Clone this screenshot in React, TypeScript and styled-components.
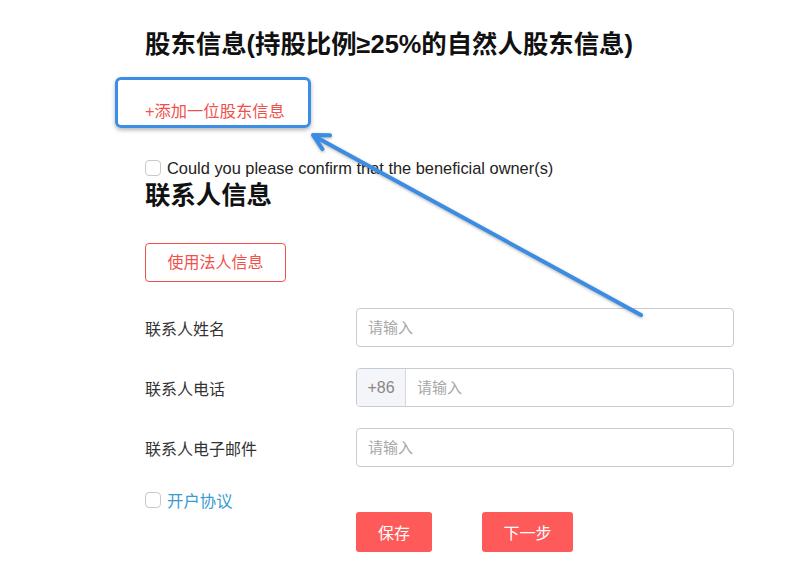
import React from "react";
import styled, { createGlobalStyle } from "styled-components";

const GlobalStyle = createGlobalStyle`
  html, body {
    margin: 0;
    padding: 0;
    background: #fff;
  }
  body {
    font-family: "Liberation Sans", "Noto Sans CJK SC", sans-serif;
    color: #222;
  }
`;

const red = "#f2504b";
const fill = "#ff5a5a";

const Page = styled.div`
  position: relative;
  width: 800px;
  height: 572px;
  overflow: hidden;
  display: flex;
  flex-direction: column;
  align-items: flex-start;
  padding-left: 145px;
  box-sizing: border-box;
`;

const SectionTitle = styled.h2<{ $top: number }>`
  margin: ${(p) => p.$top}px 0 0;
  font-size: 25.4px;
  line-height: 30px;
  height: 30px;
  font-weight: bold;
  color: #111;
  white-space: nowrap;
`;

const AddLink = styled.a`
  margin-top: 40px;
  font-size: 16.3px;
  line-height: 24px;
  color: ${red};
  cursor: pointer;
`;

const CheckRow = styled.label<{ $top: number }>`
  display: flex;
  align-items: center;
  gap: 6px;
  margin-top: ${(p) => p.$top}px;
  height: 20px;
  font-size: 16.4px;
  color: #222;
  white-space: nowrap;
`;

const Box = styled.span`
  width: 16px;
  height: 16px;
  border: 1px solid #c9c9c9;
  border-radius: 4px;
  background: #fff;
  box-sizing: border-box;
  flex: none;
`;

const AgreeText = styled.span`
  color: #3a9bd0;
`;

const OutlineButton = styled.button`
  margin-top: 33px;
  width: 141px;
  height: 39px;
  padding: 0 0 3px;
  border: 1px solid ${red};
  border-radius: 4px;
  background: #fff;
  color: ${red};
  font: inherit;
  font-size: 16px;
`;

const Form = styled.div`
  margin-top: 26px;
  display: flex;
  flex-direction: column;
  gap: 21px;
`;

const Row = styled.div`
  display: grid;
  grid-template-columns: 211px 378px;
  align-items: center;
  height: 39px;
`;

const Label = styled.span`
  font-size: 16px;
  color: #333;
`;

const InputWrap = styled.div`
  display: flex;
  height: 39px;
  border: 1px solid #c6ccd6;
  border-radius: 4px;
  box-sizing: border-box;
  overflow: hidden;
  background: #fff;
`;

const Prefix = styled.span`
  width: 48px;
  flex: none;
  display: flex;
  align-items: center;
  justify-content: center;
  background: #f4f5f9;
  border-right: 1px solid #d4d8e0;
  color: #888;
  font-size: 16px;
`;

const Input = styled.input`
  flex: 1;
  border: none;
  outline: none;
  padding: 0 11px;
  font: inherit;
  font-size: 15px;
  color: #333;
  background: transparent;
  &::placeholder {
    color: #a8a8a8;
  }
`;

const Actions = styled.div`
  margin-top: 2px;
  margin-left: 211px;
  display: flex;
  gap: 50px;
`;

const FillButton = styled.button<{ $w: number }>`
  width: ${(p) => p.$w}px;
  height: 40px;
  border: none;
  border-radius: 3px;
  background: ${fill};
  color: #fff;
  font: inherit;
  font-size: 16px;
`;

const Highlight = styled.div`
  position: absolute;
  left: 115px;
  top: 77px;
  width: 196px;
  height: 51px;
  border: 3px solid #3b8ee4;
  border-radius: 6px;
  box-sizing: border-box;
  box-shadow: 0 2px 4px rgba(0, 0, 0, 0.3);
  pointer-events: none;
`;

const ArrowLayer = styled.svg`
  position: absolute;
  left: 0;
  top: 0;
  pointer-events: none;
  filter: drop-shadow(0 1px 1.5px rgba(0, 0, 0, 0.3));
`;

const fields = [
  { label: "联系人姓名" },
  { label: "联系人电话", prefix: "+86" },
  { label: "联系人电子邮件" },
];

function Arrow() {
  const tip = { x: 313, y: 135 };
  const tail = { x: 641, y: 315 };
  const a = Math.atan2(tail.y - tip.y, tail.x - tip.x);
  const len = 17;
  const spread = 0.48;
  const p1 = { x: tip.x + len * Math.cos(a - spread), y: tip.y + len * Math.sin(a - spread) };
  const p2 = { x: tip.x + len * Math.cos(a + spread), y: tip.y + len * Math.sin(a + spread) };
  return (
    <ArrowLayer width="800" height="572">
      <g stroke="#3a8de3" strokeWidth="4" strokeLinecap="round" strokeLinejoin="round" fill="none">
        <line x1={tail.x} y1={tail.y} x2={tip.x + 1} y2={tip.y + 1} />
        <polyline points={`${p1.x},${p1.y} ${tip.x},${tip.y} ${p2.x},${p2.y}`} />
      </g>
    </ArrowLayer>
  );
}

function App() {
  return (
    <>
      <GlobalStyle />
      <Page>
        <SectionTitle $top={29}>股东信息(持股比例≥25%的自然人股东信息)</SectionTitle>
        <AddLink>+添加一位股东信息</AddLink>
        <CheckRow $top={35}>
          <Box />
          Could you please confirm that the beneficial owner(s)
        </CheckRow>
        <SectionTitle $top={2}>联系人信息</SectionTitle>
        <OutlineButton>使用法人信息</OutlineButton>
        <Form>
          {fields.map((f) => (
            <Row key={f.label}>
              <Label>{f.label}</Label>
              <InputWrap>
                {f.prefix && <Prefix>{f.prefix}</Prefix>}
                <Input placeholder="请输入" />
              </InputWrap>
            </Row>
          ))}
        </Form>
        <CheckRow $top={23}>
          <Box />
          <AgreeText>开户协议</AgreeText>
        </CheckRow>
        <Actions>
          <FillButton $w={76}>保存</FillButton>
          <FillButton $w={91}>下一步</FillButton>
        </Actions>
        <Highlight />
        <Arrow />
      </Page>
    </>
  );
}

export default App;
